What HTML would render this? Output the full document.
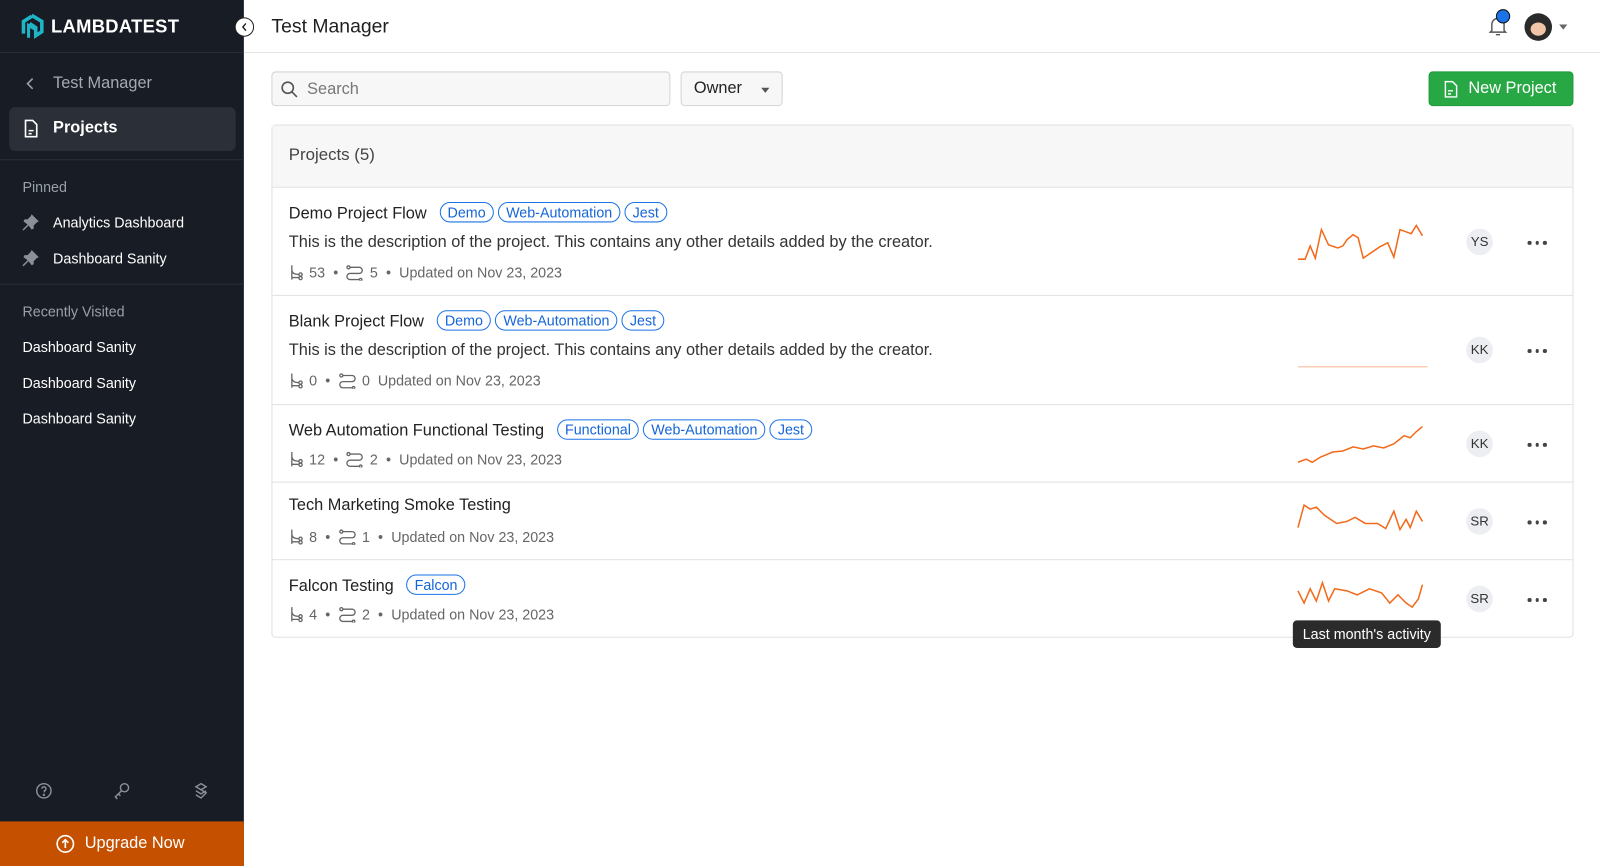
<!DOCTYPE html>
<html><head><meta charset="utf-8"><style>
*{box-sizing:border-box;margin:0;padding:0}
body{width:1600px;height:866px;background:#fff;overflow:hidden}
#w{position:absolute;left:0;top:0;width:1568px;height:849px;transform:scale(1.0204);transform-origin:0 0;font-family:"Liberation Sans",sans-serif;color:#1f1f1f}
.sb{position:absolute;left:0;top:0;width:239px;height:849px;background:#181c24;color:#fff}
.abs{position:absolute}
.tag{display:inline-block;border:1.5px solid #1a73e8;color:#1565d8;border-radius:11px;padding:0 7px;font-size:14px;line-height:18px;margin-left:4px;vertical-align:1px}
.row{position:absolute;left:266px;width:1276px;border-top:1px solid #e2e2e2}
.t{position:absolute;left:17px;font-size:16px;color:#222;white-space:nowrap}
.d{position:absolute;left:17px;font-size:16px;color:#333;white-space:nowrap}
.m{position:absolute;left:17px;font-size:14px;color:#666;display:flex;align-items:center;white-space:nowrap}
.m svg{margin-right:6px}
.m b{font-weight:normal;margin:0 8px}
.av{position:absolute;left:1171px;width:26px;height:26px;border-radius:50%;background:#eceef2;font-size:13px;text-align:center;line-height:26px;color:#333}
.dots{position:absolute;left:1231px;display:flex;gap:4px}
.dots i{width:3.5px;height:3.5px;border-radius:50%;background:#444;display:block}
.sp{position:absolute;left:1004px}
.side{font-size:14px;position:absolute;left:22px}
</style></head><body><div id="w">
<svg width="0" height="0" style="position:absolute"><defs>
<symbol id="br" viewBox="0 0 14 16"><g fill="none" stroke="#666" stroke-width="1.3"><path d="M3 1v14M3 5c0 4 3 5 7 5M3 13h7"/><circle cx="11.5" cy="10" r="1.6"/><circle cx="11.5" cy="13.5" r="1.6"/></g></symbol>
<symbol id="fl" viewBox="0 0 17 16"><g fill="none" stroke="#666" stroke-width="1.3"><path d="M4 3h9a3 3 0 0 1 0 6H4a3 3 0 0 0 0 6h9"/><circle cx="2.5" cy="3" r="1.5"/><circle cx="14.5" cy="15" r="1.2"/></g></symbol>
</defs></svg>
<div class="sb">
 <svg class="abs" style="left:19px;top:13px" width="24" height="26" viewBox="0 0 24 26"><path d="M12 2 L22 8 V18 L16 22 V14 L10 10 M4 20 V8 L12 3" fill="none" stroke="#1fb5c7" stroke-width="3.5"/><path d="M9 24 V12 L16 16" fill="none" stroke="#1fb5c7" stroke-width="3"/></svg>
 <div class="abs" style="left:50px;top:16px;font-size:18px;font-weight:bold;letter-spacing:.3px">LAMBDATEST</div>
 <div class="abs" style="left:0;top:51px;width:239px;border-top:1px solid #2a2f38"></div>
 <svg class="abs" style="left:25px;top:76px" width="10" height="12" viewBox="0 0 10 12"><path d="M7 1L2 6l5 5" fill="none" stroke="#9aa0a8" stroke-width="1.6"/></svg>
 <div class="abs" style="left:52px;top:73px;color:#a5aab2;font-size:16px">Test Manager</div>
 <div class="abs" style="left:9px;top:105px;width:222px;height:43px;background:#2a2f38;border-radius:6px"></div>
 <svg class="abs" style="left:23px;top:117px" width="15" height="18" viewBox="0 0 15 18"><path d="M2 1h7l4 4v12H2z" fill="none" stroke="#fff" stroke-width="1.6"/><path d="M5 11h5M5 14h3" stroke="#fff" stroke-width="1.5"/></svg>
 <div class="abs" style="left:52px;top:117px;font-size:16px;font-weight:bold">Projects</div>
 <div class="abs" style="left:0;top:156px;width:239px;border-top:1px solid #2a2f38"></div>
 <div class="side" style="top:175px;color:#9aa0a8">Pinned</div>
 <svg class="abs" style="left:22px;top:209px" width="17" height="17" viewBox="0 0 17 17"><path d="M9 1l7 7-2 1-3 3 0 3-2 1-3-4-5 5-1-1 5-5-4-3 1-2 3 0 3-3z" fill="#8a9099"/></svg>
 <div class="side" style="left:52px;top:210px">Analytics Dashboard</div>
 <svg class="abs" style="left:22px;top:244px" width="17" height="17" viewBox="0 0 17 17"><path d="M9 1l7 7-2 1-3 3 0 3-2 1-3-4-5 5-1-1 5-5-4-3 1-2 3 0 3-3z" fill="#8a9099"/></svg>
 <div class="side" style="left:52px;top:245px">Dashboard Sanity</div>
 <div class="abs" style="left:0;top:278px;width:239px;border-top:1px solid #2a2f38"></div>
 <div class="side" style="top:297px;color:#9aa0a8">Recently Visited</div>
 <div class="side" style="top:332px">Dashboard Sanity</div>
 <div class="side" style="top:367px">Dashboard Sanity</div>
 <div class="side" style="top:402px">Dashboard Sanity</div>
 <svg class="abs" style="left:34px;top:766px" width="18" height="18" viewBox="0 0 18 18" fill="none" stroke="#8a9099" stroke-width="1.4"><circle cx="9" cy="9" r="7"/><path d="M7 7a2 2 0 1 1 2.5 2v1.5"/><circle cx="9" cy="13" r=".5"/></svg>
 <svg class="abs" style="left:111px;top:766px" width="18" height="18" viewBox="0 0 18 18" fill="none" stroke="#8a9099" stroke-width="1.4"><circle cx="11" cy="6" r="4"/><path d="M8 9l-6 6 2 2M5 12l2 2"/></svg>
 <svg class="abs" style="left:188px;top:766px" width="18" height="18" viewBox="0 0 18 18" fill="none" stroke="#8a9099" stroke-width="1.4"><path d="M9 2l5 3-5 3-5-3zM4 9l5 3 5-3M9 8l5 3-5 5-5-3"/></svg>
 <div class="abs" style="left:0;top:805px;width:239px;height:44px;background:#c55000"></div>
 <svg class="abs" style="left:54px;top:817px" width="20" height="20" viewBox="0 0 20 20" fill="none" stroke="#fff" stroke-width="1.6"><circle cx="10" cy="10" r="8"/><path d="M10 14V6M7 9l3-3 3 3"/></svg>
 <div class="abs" style="left:83px;top:818px;font-size:16px">Upgrade Now</div>
</div>
<div class="abs" style="left:230px;top:17px;width:19px;height:19px;border-radius:50%;background:#fff;border:1.5px solid #222"></div>
<svg class="abs" style="left:236px;top:22px" width="7" height="9" viewBox="0 0 7 9"><path d="M5 1L2 4.5 5 8" fill="none" stroke="#222" stroke-width="1.4"/></svg>
<div class="abs" style="left:266px;top:16px;font-size:19px;color:#1f1f1f">Test Manager</div>
<div class="abs" style="left:239px;top:51px;width:1361px;border-top:1px solid #e4e4e4"></div>
<svg class="abs" style="left:1458px;top:14px" width="20" height="22" viewBox="0 0 20 22" fill="none" stroke="#555" stroke-width="1.4"><path d="M4 16V10a6 6 0 0 1 12 0v6l1.5 1.5h-15zM8 20h4"/></svg>
<div class="abs" style="left:1466px;top:9px;width:14px;height:14px;border-radius:50%;background:#1a73e8;border:1.5px solid #111"></div>
<div class="abs" style="left:1494px;top:13px;width:27px;height:27px;border-radius:50%;background:#2a2a2a;overflow:hidden"><div style="margin:9px auto 0;width:15px;height:13px;border-radius:50%;background:#f2c4a8"></div></div>
<div class="abs" style="left:1528px;top:24px;width:0;height:0;border:4px solid transparent;border-top:5px solid #666"></div>
<div class="abs" style="left:266px;top:70px;width:391px;height:34px;border:1px solid #d4d4d4;border-radius:4px;background:#f7f7f7"></div>
<svg class="abs" style="left:275px;top:79px" width="17" height="17" viewBox="0 0 17 17" fill="none" stroke="#555" stroke-width="1.6"><circle cx="7" cy="7" r="5.5"/><path d="M11 11l5 5"/></svg>
<div class="abs" style="left:301px;top:79px;font-size:16px;color:#777">Search</div>
<div class="abs" style="left:667px;top:70px;width:100px;height:34px;border:1px solid #d4d4d4;border-radius:4px;background:#f7f7f7"></div>
<div class="abs" style="left:680px;top:78px;font-size:16px;color:#222">Owner</div>
<div class="abs" style="left:746px;top:86px;border:4px solid transparent;border-top:5px solid #555"></div>
<div class="abs" style="left:1400px;top:70px;width:142px;height:34px;border-radius:4px;background:#28a745;border:1px solid #1f9a3b"></div>
<svg class="abs" style="left:1415px;top:79px" width="14" height="17" viewBox="0 0 14 17" fill="none" stroke="#fff" stroke-width="1.4"><path d="M1.5 1h7l4 4v11h-11z"/><path d="M4 10h5M4 13h3"/></svg>
<div class="abs" style="left:1439px;top:78px;font-size:16px;color:#fff">New Project</div>
<div class="abs" style="left:266px;top:122px;width:1276px;height:503px;border:1.5px solid #e0e0e0;border-radius:4px"></div>
<div class="abs" style="left:267px;top:123px;width:1274px;height:60px;background:#f7f7f7"></div>
<div class="abs" style="left:283px;top:143px;font-size:16.5px;color:#444">Projects (5)</div>

<div class="row" style="top:183px;height:106px">
 <div class="t" style="top:14px">Demo Project Flow <span class="tag" style="margin-left:8px">Demo</span><span class="tag">Web-Automation</span><span class="tag">Jest</span></div>
 <div class="d" style="top:45px">This is the description of the project. This contains any other details added by the creator.</div>
 <div class="m" style="top:75px"><svg width="14" height="16"><use href="#br"/></svg>53<b>•</b><svg width="17" height="16"><use href="#fl"/></svg>5<b>•</b>Updated on Nov 23, 2023</div>
 <svg class="sp" style="top:35px" width="135" height="40"><polyline fill="none" stroke="#f26a1b" stroke-width="1.5" points="2,35 9,35 14,22 19,34 25,6 32,21 41,24 46,22 50,16 56,11 61,14 66,34 82,23 90,19 96,33 102,6 113,10 118,2 124,12"/></svg>
 <div class="av" style="top:40px">YS</div><div class="dots" style="top:52px"><i></i><i></i><i></i></div>
</div>
<div class="row" style="top:289px;height:107px">
 <div class="t" style="top:14px">Blank Project Flow <span class="tag" style="margin-left:8px">Demo</span><span class="tag">Web-Automation</span><span class="tag">Jest</span></div>
 <div class="d" style="top:45px">This is the description of the project. This contains any other details added by the creator.</div>
 <div class="m" style="top:75px"><svg width="14" height="16"><use href="#br"/></svg>0<b>•</b><svg width="17" height="16"><use href="#fl"/></svg>0&nbsp;&nbsp;Updated on Nov 23, 2023</div>
 <div class="abs" style="left:1006px;top:69px;width:127px;border-top:1.5px solid #f6b790"></div>
 <div class="av" style="top:40px">KK</div><div class="dots" style="top:52px"><i></i><i></i><i></i></div>
</div>
<div class="row" style="top:396px;height:76px">
 <div class="t" style="top:14px">Web Automation Functional Testing <span class="tag" style="margin-left:8px">Functional</span><span class="tag">Web-Automation</span><span class="tag">Jest</span></div>
 <div class="m" style="top:45px"><svg width="14" height="16"><use href="#br"/></svg>12<b>•</b><svg width="17" height="16"><use href="#fl"/></svg>2<b>•</b>Updated on Nov 23, 2023</div>
 <svg class="sp" style="top:18px" width="135" height="42"><polyline fill="none" stroke="#f26a1b" stroke-width="1.5" points="2,38 10,35 16,38 24,33 36,28 46,27 56,23 66,25 76,22 86,24 96,20 106,12 112,14 118,8 124,3"/></svg>
 <div class="av" style="top:25px">KK</div><div class="dots" style="top:37px"><i></i><i></i><i></i></div>
</div>
<div class="row" style="top:472px;height:76px">
 <div class="t" style="top:14px">Tech Marketing Smoke Testing</div>
 <div class="m" style="top:45px"><svg width="14" height="16"><use href="#br"/></svg>8<b>•</b><svg width="17" height="16"><use href="#fl"/></svg>1<b>•</b>Updated on Nov 23, 2023</div>
 <svg class="sp" style="top:16px" width="135" height="40"><polyline fill="none" stroke="#f26a1b" stroke-width="1.5" points="2,28 8,6 14,10 20,8 28,16 40,24 50,22 58,18 68,24 80,24 88,29 96,12 102,30 108,20 112,28 118,12 124,22"/></svg>
 <div class="av" style="top:25px">SR</div><div class="dots" style="top:37px"><i></i><i></i><i></i></div>
</div>
<div class="row" style="top:548px;height:76px">
 <div class="t" style="top:14px">Falcon Testing <span class="tag" style="margin-left:8px">Falcon</span></div>
 <div class="m" style="top:45px"><svg width="14" height="16"><use href="#br"/></svg>4<b>•</b><svg width="17" height="16"><use href="#fl"/></svg>2<b>•</b>Updated on Nov 23, 2023</div>
 <svg class="sp" style="top:16px" width="135" height="40"><polyline fill="none" stroke="#f26a1b" stroke-width="1.5" points="2,14 8,26 14,12 20,24 26,6 32,24 38,12 50,14 60,18 72,12 84,16 92,26 100,18 108,26 114,30 120,22 124,8"/></svg>
 <div class="av" style="top:25px">SR</div><div class="dots" style="top:37px"><i></i><i></i><i></i></div>
</div>
<div class="abs" style="left:1267px;top:608px;width:145px;height:27px;background:#2b2b2b;border-radius:4px;color:#fff;font-size:14px;text-align:center;line-height:27px;white-space:nowrap">Last month's activity</div>
</div></body></html>
